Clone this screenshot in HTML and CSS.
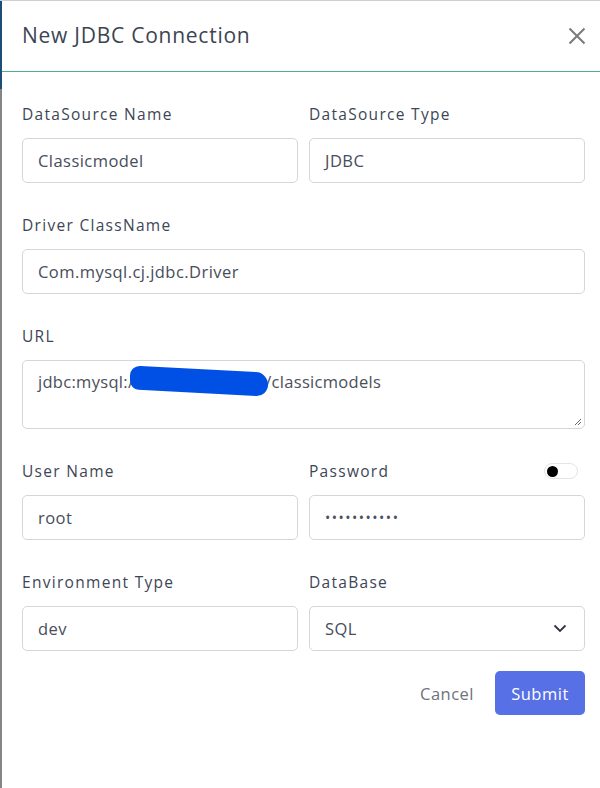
FILE: index.html
```html
<!DOCTYPE html>
<html>
<head>
<meta charset="utf-8">
<link rel="stylesheet" href="styles.css">
</head>
<body>
<div class="frame">
  <div class="edge"><div class="edge-top"></div></div>
  <div class="dialog">
    <div class="header">
      <h1 class="title">New JDBC Connection</h1>
      <svg class="close" width="18" height="18" viewBox="0 0 18 18"><path d="M1.5 1.5 L16.5 16.5 M16.5 1.5 L1.5 16.5" stroke="#7a7a7a" stroke-width="2" fill="none"/></svg>
    </div>
    <div class="form">
      <div class="row two">
        <div class="field">
          <div class="label">DataSource Name</div>
          <div class="input">Classicmodel</div>
        </div>
        <div class="field">
          <div class="label">DataSource Type</div>
          <div class="input">JDBC</div>
        </div>
      </div>
      <div class="row">
        <div class="field">
          <div class="label">Driver ClassName</div>
          <div class="input">Com.mysql.cj.jdbc.Driver</div>
        </div>
      </div>
      <div class="row">
        <div class="field">
          <div class="label">URL</div>
          <div class="textarea"><span class="url">jdbc:mysql:/<span class="redact"></span>/classicmodels</span>
            <svg class="grip" width="10" height="10" viewBox="0 0 10 10"><path d="M9 3 L3 9 M9 6 L6 9" stroke="#666" stroke-width="1" fill="none"/></svg>
          </div>
        </div>
      </div>
      <div class="row two">
        <div class="field">
          <div class="label">User Name</div>
          <div class="input">root</div>
        </div>
        <div class="field">
          <div class="label label-toggle">Password <span class="toggle"><span class="knob"></span></span></div>
          <div class="input dots">•••••••••••</div>
        </div>
      </div>
      <div class="row two">
        <div class="field">
          <div class="label">Environment Type</div>
          <div class="input">dev</div>
        </div>
        <div class="field">
          <div class="label">DataBase</div>
          <div class="input select">SQL
            <svg width="14" height="9" viewBox="0 0 14 9"><path d="M1.5 1.5 L7 7 L12.5 1.5" stroke="#2f3440" stroke-width="1.8" fill="none"/></svg>
          </div>
        </div>
      </div>
      <div class="actions">
        <button class="btn cancel">Cancel</button>
        <button class="btn submit">Submit</button>
      </div>
    </div>
  </div>
</div>
</body>
</html>
```
FILE: styles.css
```css
html, body {
  margin: 0;
  padding: 0;
  background: #fff;
}
body {
  font-family: "Open Sans", "Noto Sans", sans-serif;
  color: #3d4656;
}
.frame {
  display: flex;
  width: 600px;
  height: 788px;
  border-top: 1px solid #cfcfcf;
  box-sizing: border-box;
}
.edge {
  width: 2px;
  flex: none;
  background: #858585;
}
.edge-top {
  height: 88px;
  background: #1e4c78;
}
.dialog {
  flex: 1;
  display: flex;
  flex-direction: column;
}
.header {
  height: 70px;
  border-bottom: 1px solid #4cb08a;
  display: flex;
  align-items: center;
  justify-content: space-between;
  padding: 0 14px 0 20px;
}
.title {
  margin: 0;
  font-size: 21px;
  font-weight: 500;
  color: #3c4452;
  letter-spacing: 0.75px;
  position: relative;
  top: -1px;
}
.close {
  display: block;
}
.form {
  padding: 30px 15px 0 20px;
  display: flex;
  flex-direction: column;
  gap: 30px;
}
.row {
  display: grid;
  grid-template-columns: 1fr;
}
.row.two {
  grid-template-columns: 1fr 1fr;
  column-gap: 11px;
}
.field {
  display: flex;
  flex-direction: column;
  gap: 12px;
}
.label {
  height: 24px;
  line-height: 24px;
  font-size: 15.5px;
  font-weight: 500;
  letter-spacing: 1.3px;
  color: #3d4656;
}
.label-toggle {
  display: flex;
  justify-content: space-between;
  align-items: center;
}
.toggle {
  width: 30px;
  height: 14px;
  border: 1px solid #e2e4e8;
  border-radius: 9px;
  margin-right: 7px;
  display: flex;
  align-items: center;
  padding-left: 2px;
}
.knob {
  width: 11px;
  height: 11px;
  border-radius: 50%;
  background: #000;
}
.input {
  height: 45px;
  box-sizing: border-box;
  border: 1px solid #d2d6dd;
  border-radius: 5px;
  padding: 0 15px;
  display: flex;
  align-items: center;
  font-size: 16.5px;
  letter-spacing: 0.45px;
  color: #474d5a;
}
.dots {
  font-size: 14px;
  letter-spacing: 1.5px;
  color: #4a5060;
}
.select {
  justify-content: space-between;
  padding-right: 17px;
}
.textarea {
  position: relative;
  height: 69px;
  box-sizing: border-box;
  border: 1px solid #d2d6dd;
  border-radius: 5px;
  padding: 8px 15px;
  font-size: 16.5px;
  font-weight: 400;
  letter-spacing: 0.3px;
  color: #4a4f5a;
}
.url {
  display: inline-flex;
  align-items: center;
}
.redact {
  display: inline-block;
  width: 138px;
  height: 24px;
  background: #0050e6;
  border-radius: 12px 14px 14px 10px;
  margin: 0 -3px 0 -4px;
  transform: skewY(3deg);
}
.grip {
  position: absolute;
  right: 2px;
  bottom: 2px;
}
.actions {
  display: flex;
  justify-content: flex-end;
  align-items: center;
  gap: 6px;
  margin-top: -9px;
}
.btn {
  font-family: inherit;
  font-size: 16.5px;
  letter-spacing: 0.5px;
  border: none;
  height: 44px;
  border-radius: 5px;
  cursor: pointer;
  position: relative;
  top: -1px;
}
.cancel {
  background: transparent;
  color: #6e727b;
  padding: 0 15px;
}
.submit {
  background: #5770e6;
  color: #fff;
  width: 90px;
  font-weight: 500;
}
```
